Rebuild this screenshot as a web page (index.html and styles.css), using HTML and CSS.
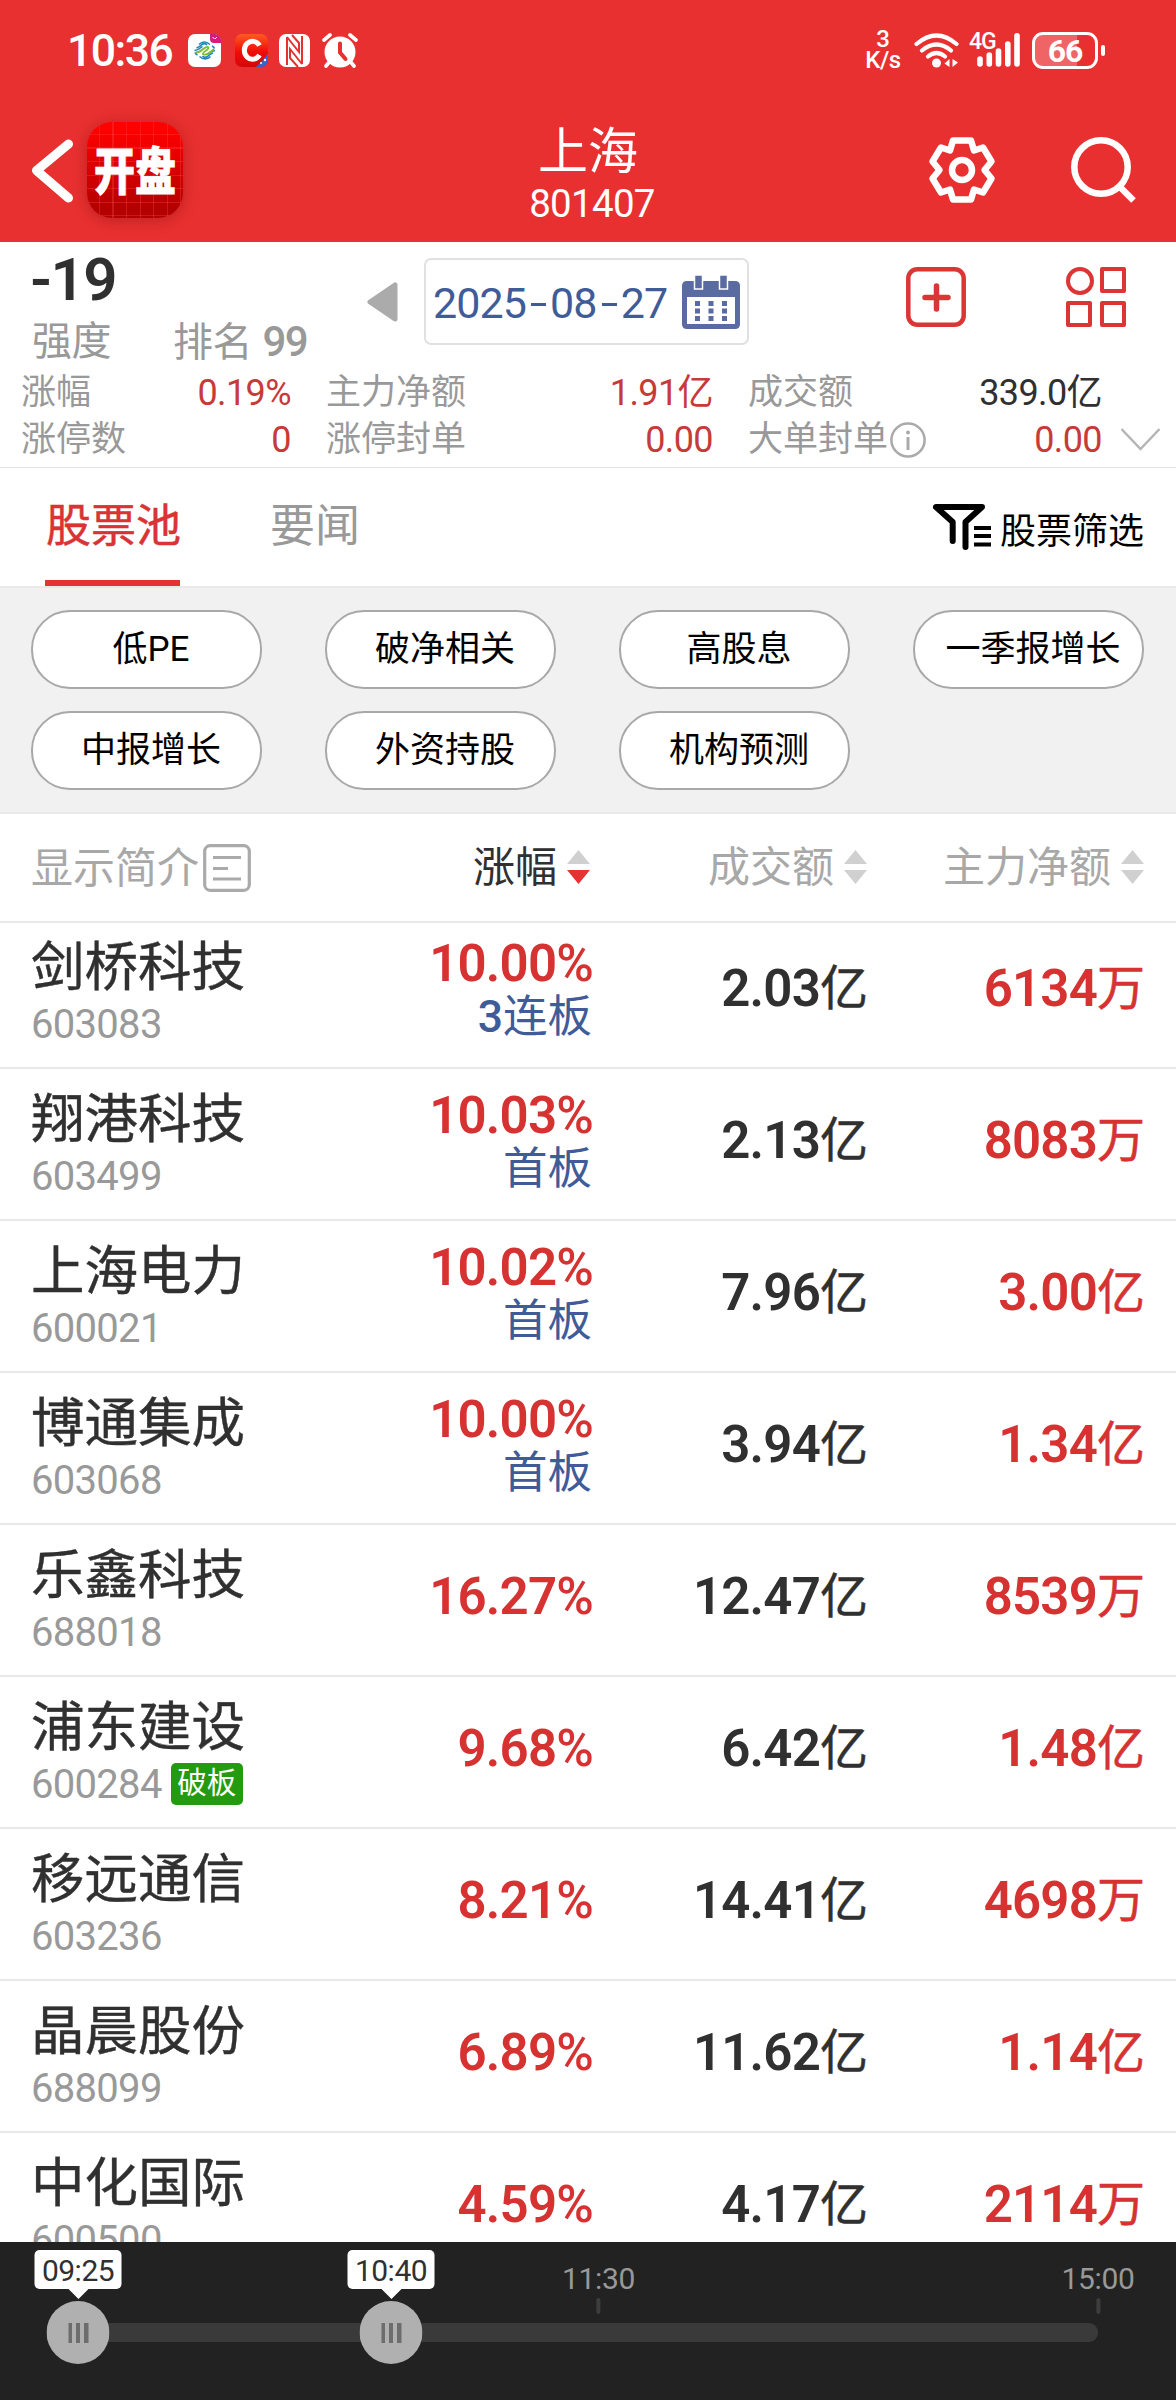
FILE: index.html
```html
<!DOCTYPE html>
<html lang="zh-CN">
<head>
<meta charset="utf-8">
<title>上海 801407</title>
<link rel="stylesheet" href="styles.css">
</head>
<body>
<div class="app">
  <header class="top">
    <div class="status">
      <span class="clock">10:36</span>
      <svg class="st-app1" width="33" height="33" viewBox="0 0 33 33"><rect width="33" height="33" rx="7" fill="#fff"/><path d="M22 0h5a6 6 0 0 1 6 6v3h-7q-4 0-4-4z" fill="#d81b7a"/><path d="M24.500 3l2 2M29 3l-2 2" stroke="#fff" stroke-width="1"/><g fill="none" stroke-width="1.600"><path d="M11 10.500q5-5 11 0M8.500 14q3-1 5.500-3.500 3-2 5 .5M6.500 16.500q4-.5 8-4 M22.500 22.500q-5 5-11 0M25 19q-3 1-5.500 3.500-3 2-5-.5M27 16.500q-4 .5-8 4M24 12q2 1 2.500 2.500M9.500 21q-2-1-2.500-2.500" stroke="#1f86bd"/><path d="M7.500 18.500q4 0 7-3 4-3.500 5.500-2.500t-2 3.500-3 3.500 3 .5 8-5.500" stroke="#7fbb32" stroke-width="1.800"/></g></svg>
      <svg class="st-app2" width="33" height="33" viewBox="0 0 33 33"><defs><linearGradient id="cg" x2="0" y2="1"><stop offset="0" stop-color="#ff5a22"/><stop offset=".55" stop-color="#f00b08"/><stop offset="1" stop-color="#d40808"/></linearGradient></defs><rect width="33" height="33" rx="7" fill="url(#cg)"/><path d="M33 19v7a7 7 0 0 1-7 7h-5q6-5 12-14z" fill="#3c62cf"/><path d="M24.500 11.500a8.200 9 0 1 0 0 9.500" fill="none" stroke="#fff" stroke-width="5"/><circle cx="26" cy="29" r="1" fill="#fff"/><circle cx="30" cy="26" r="1.200" fill="#fff"/></svg>
      <svg class="st-nfc" width="31" height="33" viewBox="0 0 31 33"><rect width="31" height="33" rx="7" fill="#fff"/><path d="M8 3v28M23 2v28M8 3L20 18V9L13 1M23 30L11 15v9l8 9" fill="none" stroke="#e83030" stroke-width="2"/></svg>
      <svg class="st-alarm" width="36" height="35" viewBox="0 0 36 35"><g stroke="#fff" stroke-width="3.600" stroke-linecap="round"><path d="M2 7l6-5M34 7l-6-5M4 33l5-6M32 33l-5-6"/></g><circle cx="18" cy="19" r="15.500" fill="#fff"/><path d="M18 10.500v9l5.500 6.500" fill="none" stroke="#e83030" stroke-width="4" stroke-linecap="round"/></svg>
      <span class="speed"><i>3</i><i>K/s</i></span>
      <svg class="st-wifi" width="45" height="35" viewBox="0 0 45 35" fill="none" stroke="#fff" stroke-width="4.200" stroke-linecap="round"><path d="M2.500 11q20-17 40 0M8 17.500q14.500-12 29 0M14 23.500q8.500-7 17 0"/><circle cx="22.500" cy="30" r="4.500" fill="#fff" stroke="none"/><path d="M35.500 26v8l-5-3.500zM38.500 26v8l5.500-4.500z" fill="#fff" stroke="none"/></svg>
      <div class="cell"><span>4G</span><svg width="43" height="34" viewBox="0 0 43 34" stroke="#fff" stroke-width="5.600" stroke-linecap="round"><path d="M3 26v5M12.300 22v9M21.500 18v13M30.800 11v20M40 2.800v28.200"/></svg></div>
      <div class="battery"><span>66</span></div><i class="nub"></i>
    </div>
    <div class="nav">
      <svg class="back" width="44" height="64" viewBox="0 0 44 64" fill="none" stroke="#fff" stroke-width="9" stroke-linecap="round" stroke-linejoin="round"><path d="M37.500 5L5.500 31.500 37.500 59"/></svg>
      <div class="logo"><span>开盘</span></div>
      <div class="title"><h1>上海</h1><p>801407</p></div>
      <svg class="gear" width="68" height="68" viewBox="-34 -34 68 68" fill="none" stroke="#fff"><path d="M-9-29.500H9L12-19.500 21-22.500 29.500-8.500 22.500 0 29.500 8.500 21 22.500 12 19.500 9 29.500H-9L-12 19.500-21 22.500-29.500 8.500-22.500 0-29.500-8.500-21-22.500-12-19.500Z" stroke-width="6.500" stroke-linejoin="round"/><circle r="10" stroke-width="6.500"/></svg>
      <svg class="search" width="68" height="68" viewBox="0 0 68 68" fill="none" stroke="#fff" stroke-width="6.500"><circle cx="32" cy="32" r="26.700"/><path d="M51 52l13.500 13.500"/></svg>
    </div>
  </header>

  <section class="summary">
    <div class="strength">
      <b class="score">-19</b>
      <div class="rank"><span>强度</span><span>排名 <em>99</em></span></div>
    </div>
    <svg class="prev" width="31" height="40" viewBox="0 0 31 40"><path d="M28 3v34L3 20z" fill="#ababab" stroke="#ababab" stroke-width="5" stroke-linejoin="round"/></svg>
    <div class="date"><span>2025<u></u>08<u></u>27</span>
      <svg width="58" height="54" viewBox="0 0 58 54"><path d="M0 11q0-5 5-5h48q5 0 5 5v38q0 5-5 5H5q-5 0-5-5z" fill="#596ba0"/><path d="M5 22h48v27H5z" fill="#fff"/><path d="M12.500 0h8v14h-8zM37.500 0h8v14h-8z" fill="#596ba0" stroke="#fff" stroke-width="1.500"/><g fill="#596ba0"><path d="M13 26h5v5h-5zM26.500 26h5v5h-5zM40 26h5v5h-5zM13 33.500h5v5h-5zM26.500 33.500h5v5h-5zM40 33.500h5v5h-5zM13 41h5v5h-5zM26.500 41h5v5h-5zM40 41h5v5h-5z"/></g></svg>
    </div>
    <svg class="add" width="60" height="60" viewBox="0 0 60 60" fill="none" stroke="#dc3535" stroke-width="4.500"><rect x="2.300" y="2.300" width="55.400" height="55.400" rx="9"/><path d="M19 30.500h23M30.500 19v23" stroke-width="5.500" stroke-linecap="round"/></svg>
    <svg class="apps" width="60" height="60" viewBox="0 0 60 60" fill="none" stroke="#dc3535" stroke-width="4"><circle cx="14" cy="14" r="12"/><path d="M36 2h22v22H36zM2 36h22v22H2zM36 36h22v22H36z" stroke-linejoin="round"/></svg>
  </section>
  <section class="stats">
    <span>涨幅</span><b>0.19%</b><span>主力净额</span><b>1.91亿</b><span>成交额</span><b class="dark">339.0亿</b><i></i>
    <span>涨停数</span><b>0</b><span>涨停封单</span><b>0.00</b><span class="info">大单封单<svg width="36" height="36" viewBox="0 0 36 36"><circle cx="18" cy="18" r="16.600" fill="none" stroke="#aaa" stroke-width="2.500"/><path d="M18 15v13" stroke="#aaa" stroke-width="3"/><circle cx="18" cy="10.500" r="2" fill="#aaa"/></svg></span><b>0.00</b><svg class="more" width="39" height="24" viewBox="0 0 39 24"><path d="M.5 1L19.500 21 38.500 1" fill="none" stroke="#b5b5b5" stroke-width="2.500"/></svg>
  </section>

  <nav class="tabs">
    <a class="on">股票池</a><a>要闻</a>
    <div class="filter"><svg width="58" height="46" viewBox="0 0 58 46" fill="none" stroke="#000"><path d="M19.700 37V18L3 3H49L32.500 18V43" stroke-width="6" stroke-linecap="round" stroke-linejoin="round"/><path d="M41 24h17M41 32h17M41 40.500h17" stroke-width="4.200"/></svg><span>股票筛选</span></div>
  </nav>

  <section class="chips">
    <a>低PE</a><a>破净相关</a><a>高股息</a><a>一季报增长</a><a>中报增长</a><a>外资持股</a><a>机构预测</a>
  </section>

  <div class="thead">
    <div class="intro">显示简介<svg width="48" height="48" viewBox="0 0 48 48" fill="none" stroke="#aaa" stroke-width="3.200"><rect x="1.700" y="1.700" width="44.600" height="44.600" rx="5.500"/><path d="M10 13.500h28M10 24.500h15M10 35h28"/></svg></div>
    <div class="sort active">涨幅<i></i></div>
    <div class="sort">成交额<i></i></div>
    <div class="sort">主力净额<i></i></div>
  </div>

  <main class="list">
    <div class="row"><div class="stock"><h2>剑桥科技</h2><p>603083</p></div><div class="pct"><b>10.00<s>%</s></b><span><b>3</b>连板</span></div><div class="amt">2.03<u>亿</u></div><div class="net">6134<u>万</u></div></div>
    <div class="row"><div class="stock"><h2>翔港科技</h2><p>603499</p></div><div class="pct"><b>10.03<s>%</s></b><span>首板</span></div><div class="amt">2.13<u>亿</u></div><div class="net">8083<u>万</u></div></div>
    <div class="row"><div class="stock"><h2>上海电力</h2><p>600021</p></div><div class="pct"><b>10.02<s>%</s></b><span>首板</span></div><div class="amt">7.96<u>亿</u></div><div class="net">3.00<u>亿</u></div></div>
    <div class="row"><div class="stock"><h2>博通集成</h2><p>603068</p></div><div class="pct"><b>10.00<s>%</s></b><span>首板</span></div><div class="amt">3.94<u>亿</u></div><div class="net">1.34<u>亿</u></div></div>
    <div class="row"><div class="stock"><h2>乐鑫科技</h2><p>688018</p></div><div class="pct"><b>16.27<s>%</s></b></div><div class="amt">12.47<u>亿</u></div><div class="net">8539<u>万</u></div></div>
    <div class="row"><div class="stock"><h2>浦东建设</h2><p>600284<mark>破板</mark></p></div><div class="pct"><b>9.68<s>%</s></b></div><div class="amt">6.42<u>亿</u></div><div class="net">1.48<u>亿</u></div></div>
    <div class="row"><div class="stock"><h2>移远通信</h2><p>603236</p></div><div class="pct"><b>8.21<s>%</s></b></div><div class="amt">14.41<u>亿</u></div><div class="net">4698<u>万</u></div></div>
    <div class="row"><div class="stock"><h2>晶晨股份</h2><p>688099</p></div><div class="pct"><b>6.89<s>%</s></b></div><div class="amt">11.62<u>亿</u></div><div class="net">1.14<u>亿</u></div></div>
    <div class="row"><div class="stock"><h2>中化国际</h2><p>600500</p></div><div class="pct"><b>4.59<s>%</s></b></div><div class="amt">4.17<u>亿</u></div><div class="net">2114<u>万</u></div></div>
  </main>

  <footer class="timeline">
    <div class="track"></div>
    <div class="mark" style="left:598.5px">11:30</div>
    <div class="mark" style="left:1098px">15:00</div>
    <div class="handle" style="left:78px"><span>09:25</span><i></i></div>
    <div class="handle" style="left:391px"><span>10:40</span><i></i></div>
  </footer>
</div>
</body>
</html>
```
FILE: styles.css
```css
* { box-sizing: border-box; margin: 0; padding: 0; }
body { background: #fff; font-family: Roboto, "Noto Sans CJK SC", sans-serif; color: #303030; }
i, em { font-style: normal; }
u, s { text-decoration: none; }
svg { display: block; flex: none; }
.app { width: 1176px; height: 2400px; overflow: hidden; display: flex; flex-direction: column; }

/* red header */
.top { height: 242px; flex: none; background: #e83030; color: #fff; display: flex; flex-direction: column; }
.status { height: 100px; display: flex; align-items: center; padding-left: 67px; }
.clock { width: 121px; font-size: 44.500px; font-weight: 500; letter-spacing: -1.500px; line-height: 50px; margin-top: 1px; }
.st-app2 { margin-left: 14px; }
.st-nfc { margin-left: 11px; }
.st-alarm { margin-left: 12px; }
.speed { width: 50px; margin-left: 500px; display: flex; flex-direction: column; align-items: center; font-size: 24px; font-weight: 500; line-height: 21px; }
.speed i:last-child { letter-spacing: -.5px; }
.st-wifi { margin-left: 6px; }
.cell { display: flex; margin-left: 10px; }
.cell span { font-size: 23px; font-weight: 500; line-height: 16px; width: 27px; letter-spacing: -1px; margin: 1px -19px 0 0; }
.battery { width: 66px; height: 37px; margin-left: 12px; border: 3px solid #fff; border-radius: 11px; background: linear-gradient(90deg, #ef6464 42px, transparent 42px); text-align: center; font-size: 32px; font-weight: 700; line-height: 32px; letter-spacing: -1px; }
.nub { width: 4px; height: 11px; margin-left: 3px; border-radius: 2px; background: #fff; }
.nav { height: 142px; display: flex; align-items: flex-start; }
.back { margin: 39px 0 0 31px; }
.logo { width: 96px; height: 96px; margin: 22px 0 0 12px; border-radius: 25px; display: flex; align-items: center; justify-content: center; box-shadow: 0 2px 14px rgba(120, 10, 10, .4);
  background: repeating-linear-gradient(90deg, transparent 0 12px, rgba(255, 80, 80, .3) 12px 13.500px), repeating-linear-gradient(transparent 0 12px, rgba(255, 80, 80, .3) 12px 13.500px), linear-gradient(#ff0000 8%, #b30000 90%); }
.logo span { font: 900 41px/50px "Noto Sans CJK SC", sans-serif; -webkit-text-stroke: .6px #fff; transform: translateY(-3px) scaleY(1.250); white-space: nowrap; }
.title { width: 200px; margin: 22px 0 0 309px; text-align: center; }
.title h1 { font-size: 50px; font-weight: 400; line-height: 60px; margin-left: -8px; }
.title p { font-size: 38.500px; line-height: 44px; letter-spacing: -.7px; }
.gear { margin: 36px 0 0 236px; }
.search { margin: 35px 0 0 73px; }

/* summary */
.summary { height: 130px; flex: none; display: flex; align-items: flex-start; }
.strength { flex: none; width: 367px; padding: 3px 0 0 30px; }
.score { display: block; font-size: 60px; font-weight: 600; line-height: 70px; letter-spacing: -1.500px; }
.rank { display: flex; gap: 62px; margin-top: 3px; padding-left: 2px; font-size: 40px; line-height: 48px; color: #999; letter-spacing: -.5px; }
.rank em { font-size: 42px; font-weight: 500; letter-spacing: -1.500px; margin-left: 1px; }
.prev { margin-top: 40px; }
.date { width: 325px; height: 87px; margin: 16px 0 0 26px; border: 2px solid #e1e1e1; border-radius: 7px; padding-left: 7px; display: flex; align-items: center; color: #3f5c99; font-size: 43px; }
.date span { display: flex; align-items: center; width: 249px; letter-spacing: -.9px; line-height: 50px; padding-top: 2px; }
.date u { width: 15px; height: 3.500px; margin: 4px 4px 0 5px; background: #3f5c99; }
.add { margin: 25px 0 0 157px; }
.apps { margin: 25px 0 0 100px; }
.stats { height: 99px; flex: none; margin-top: -3px; padding-left: 21px; border-bottom: 1px solid #e4e4e4; display: grid; grid-template-columns: 104px 166px 182px 240px 210px 179px 60px; grid-template-rows: 47px 47px; align-items: center; font-size: 35px; line-height: 44px; color: #999; white-space: nowrap; }
.stats > span { padding-top: 1px; }
.stats b { font-weight: 400; text-align: right; color: #c63a3a; font-size: 36px; letter-spacing: -.6px; }
.stats span:nth-child(3), .stats span:nth-child(10), .stats span:nth-child(5), .stats span:nth-child(12) { padding-left: 35px; }
.stats b.dark { color: #303030; }
.info { display: flex; align-items: center; gap: 2px; }
.more { margin-left: 19px; }

/* tabs */
.tabs { height: 120px; flex: none; border-bottom: 2px solid #e9e9e9; display: flex; padding-left: 45px; font-size: 45px; color: #999; }
.tabs a { height: 118px; line-height: 118px; width: 135px; text-align: center; margin-right: 90px; white-space: nowrap; }
.tabs a + a { width: 90px; margin-right: 0; }
.tabs .on { color: #d93333; font-weight: 400; -webkit-text-stroke: .5px #d93333; border-bottom: 6px solid #e33333; padding-left: 1px; }
.filter { display: flex; align-items: center; margin-left: 573px; height: 118px; font-size: 36px; color: #000; gap: 9px; }
.filter span { padding-top: 1px; }

/* filter chips */
.chips { height: 226px; flex: none; padding: 22px 0 0 31px; background: #f1f1f1; border-bottom: 2px solid #e9e9e9; display: grid; grid-template-columns: repeat(4, 231px); grid-auto-rows: 79px; gap: 22px 63px; }
.chips a { border: 2px solid #a8a8a8; border-radius: 39px; background: #fff; color: #000; font-size: 35px; line-height: 75px; text-align: center; padding-left: 9px; white-space: nowrap; }

/* table */
.thead { height: 109px; flex: none; border-bottom: 2px solid #e9e9e9; padding: 0 32px 0 31px; display: grid; grid-template-columns: 269px 290px 277px 277px; font-size: 42px; color: #a8a8a8; line-height: 108px; }
.intro { display: flex; align-items: center; gap: 4px; line-height: 112px; height: 110px; }
.intro svg { margin-top: -2px; }
.sort { display: flex; justify-content: flex-end; align-items: center; gap: 10px; height: 107px; }
.sort i { width: 23px; height: 34px; background: #d0d0d0; clip-path: polygon(50% 0, 100% 14px, 0 14px, 0 20px, 100% 20px, 50% 100%, 0 20px, 0 14px); margin-top: -1px; }
.sort.active { color: #303030; }
.sort.active i { background: linear-gradient(#d0d0d0 50%, #e53333 50%); }
.list { height: 1319px; flex: none; overflow: hidden; }
.row { height: 152px; border-bottom: 2px solid #e9e9e9; padding: 0 31px 0 31px; display: grid; grid-template-columns: 269px 293px 275px 277px; font-size: 51px; font-weight: 600; text-align: right; letter-spacing: -.8px; line-height: 52px; }
.row:first-child { margin-top: -6px; }
.row > div { padding-bottom: 6px; display: flex; align-items: center; justify-content: flex-end; }
.row .stock { flex-direction: column; justify-content: flex-start; align-items: flex-start; padding: 21px 0 0; letter-spacing: 0; }
.stock h2 { font-size: 53.500px; font-weight: 400; line-height: 60px; -webkit-text-stroke: .4px #303030; }
.stock p { display: flex; align-items: center; margin-top: 5px; font-size: 40px; font-weight: 400; line-height: 44px; color: #999; letter-spacing: -.7px; }
.stock mark { height: 42px; width: 72px; margin-left: 9px; border-radius: 5px; background: #249a10; color: #fff; font-size: 29.500px; line-height: 41px; text-align: center; letter-spacing: 0; margin-top: -3px; }
.row .pct { flex-direction: column; justify-content: center; align-items: flex-end; color: #d63232; }
.pct > b { font-weight: 600; }
.pct s { font-weight: 500; }
.pct span { font-size: 44.500px; font-weight: 400; color: #3f5c99; letter-spacing: 0; padding-right: 1px; margin: 1px 0 -3px; }
.pct span b { font-weight: 500; }
.row u { font-weight: 400; font-size: 48px; letter-spacing: 0; -webkit-text-stroke: .5px; }
.net { color: #d63232; }

/* time slider */
.timeline { position: relative; height: 158px; flex: none; background: #222; }
.track { position: absolute; left: 78px; top: 81px; width: 1020px; height: 19px; border-radius: 0 9px 9px 0; background: #3a3a3a; }
.mark, .handle { position: absolute; transform: translateX(-50%); display: flex; flex-direction: column; align-items: center; }
.mark { top: 19px; font-size: 30px; line-height: 36px; color: #999; letter-spacing: -.3px; }
.mark::after { content: ""; width: 4px; height: 16px; margin-top: 1px; border-radius: 2px; background: #3d3d3d; }
.handle { top: 8px; }
.handle span { width: 87px; height: 39px; border-radius: 5px; background: #fff; text-align: center; font-size: 30px; line-height: 41px; letter-spacing: -.5px; }
.handle::before { content: ""; position: absolute; top: 39px; border: solid transparent; border-width: 10px 10px 0; border-top-color: #fff; }
.handle i { width: 63px; height: 63px; margin-top: 12px; border-radius: 50%; background: linear-gradient(90deg, #6d6d6d 4px, transparent 4px 8px, #6d6d6d 8px 12px, transparent 12px 16px, #6d6d6d 16px) center / 20px 20px no-repeat #b0b0b0; }
```
